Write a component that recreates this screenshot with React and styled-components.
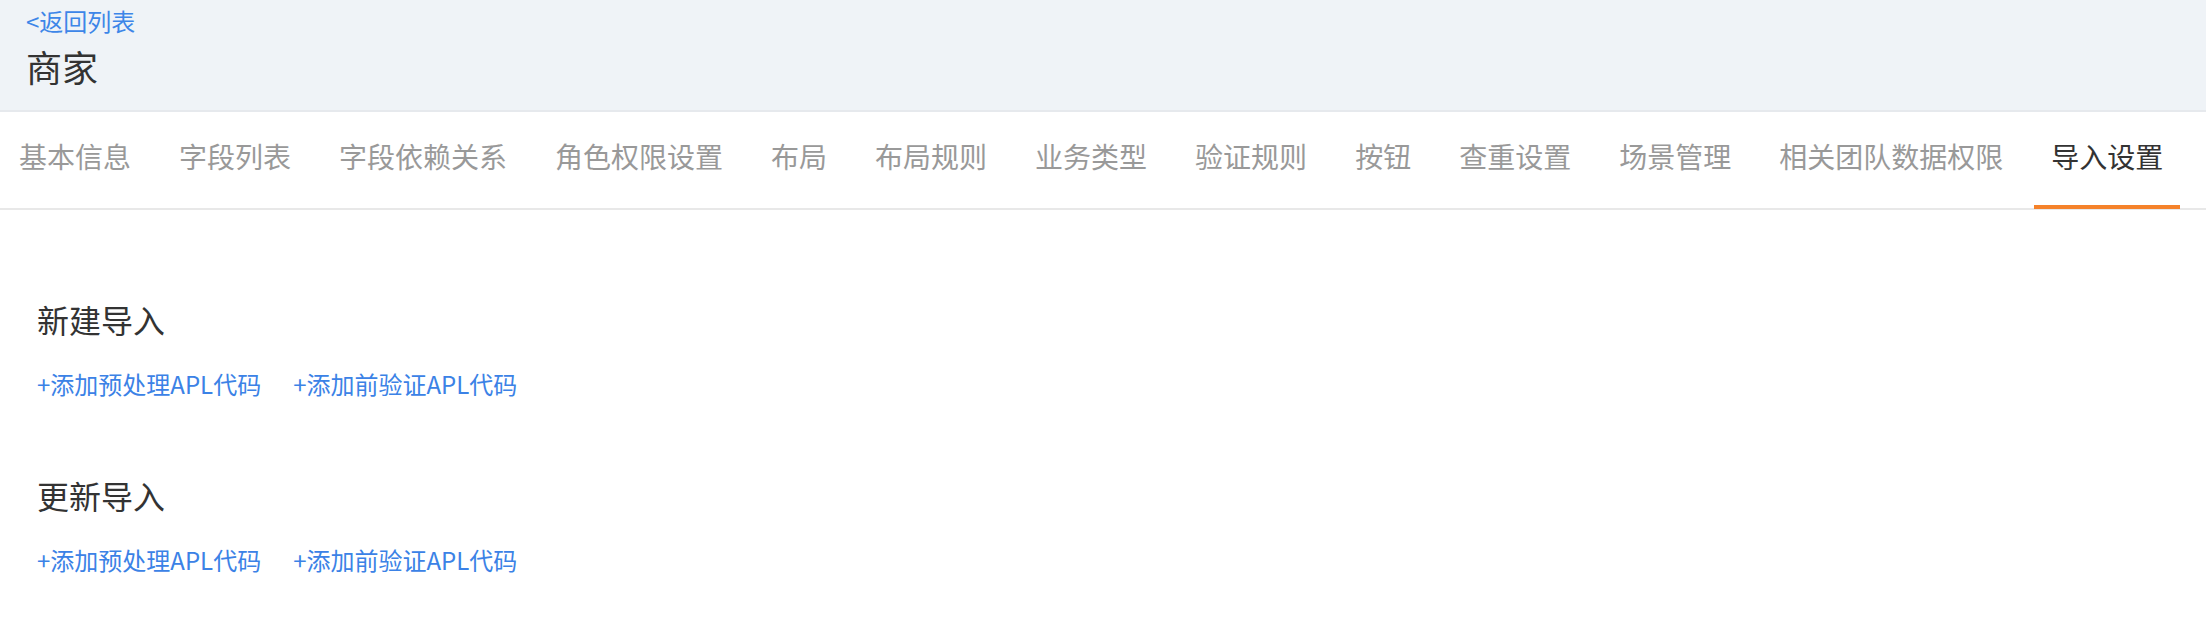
import React from "react";
import styled, { createGlobalStyle } from "styled-components";

const tabs = [
  "基本信息",
  "字段列表",
  "字段依赖关系",
  "角色权限设置",
  "布局",
  "布局规则",
  "业务类型",
  "验证规则",
  "按钮",
  "查重设置",
  "场景管理",
  "相关团队数据权限",
  "导入设置",
];

const sections = ["新建导入", "更新导入"];

export default function App() {
  const activeTab = "导入设置";
  return (
    <>
      <GlobalStyle />
      <Page>
        <Header>
          <BackLink href="#">&lt;返回列表</BackLink>
          <HeaderTitle>商家</HeaderTitle>
        </Header>
        <TabBar>
          {tabs.map((tab) => (
            <Tab key={tab} $active={tab === activeTab}>
              {tab}
            </Tab>
          ))}
        </TabBar>
        <Content>
          {sections.map((title) => (
            <Section key={title}>
              <SectionTitle>{title}</SectionTitle>
              <LinkRow>
                <ActionLink href="#">+添加预处理APL代码</ActionLink>
                <ActionLink href="#">+添加前验证APL代码</ActionLink>
              </LinkRow>
            </Section>
          ))}
        </Content>
      </Page>
    </>
  );
}

const GlobalStyle = createGlobalStyle`
  html, body {
    margin: 0;
    padding: 0;
    background: #fff;
  }
  body {
    font-family: "Noto Sans CJK SC", "Noto Sans", sans-serif;
  }
`;

const Page = styled.div`
  width: 2206px;
  min-height: 644px;
  background: #fff;
`;

const Header = styled.header`
  background-color: #eff3f7;
  border-bottom: 2px solid #e6e9ed;
  padding: 7px 26px 19px;
  box-sizing: border-box;
  height: 112px;
`;

const BackLink = styled.a`
  display: block;
  font-size: 24px;
  line-height: 28px;
  color: #3d86e8;
  text-decoration: none;
`;

const HeaderTitle = styled.h1`
  margin: 6px 0 0 0;
  font-size: 36px;
  line-height: 50px;
  font-weight: 400;
  color: #333;
`;

const TabBar = styled.nav`
  display: flex;
  gap: 14px;
  padding: 0 0 0 2px;
  height: 98px;
  box-sizing: border-box;
  border-bottom: 2px solid #e8e8e8;
`;

const Tab = styled.div`
  position: relative;
  display: flex;
  align-items: center;
  padding: 0 17px 8px;
  font-size: 28px;
  color: ${(p) => (p.$active ? "#333" : "#999")};
  white-space: nowrap;

  &::after {
    content: "";
    display: ${(p) => (p.$active ? "block" : "none")};
    position: absolute;
    left: 0;
    right: 0;
    bottom: -1px;
    height: 4px;
    background-color: #f5822a;
  }
`;

const Content = styled.main`
  padding: 87px 37px 0;
`;

const Section = styled.section`
  & + & {
    margin-top: 71px;
  }
`;

const SectionTitle = styled.h2`
  margin: 0;
  font-size: 32px;
  line-height: 44px;
  font-weight: 400;
  color: #333;
`;

const LinkRow = styled.div`
  display: flex;
  gap: 32px;
  margin-top: 25px;
  line-height: 36px;
`;

const ActionLink = styled.a`
  font-size: 24px;
  color: #3b82e6;
  text-decoration: none;
`;
